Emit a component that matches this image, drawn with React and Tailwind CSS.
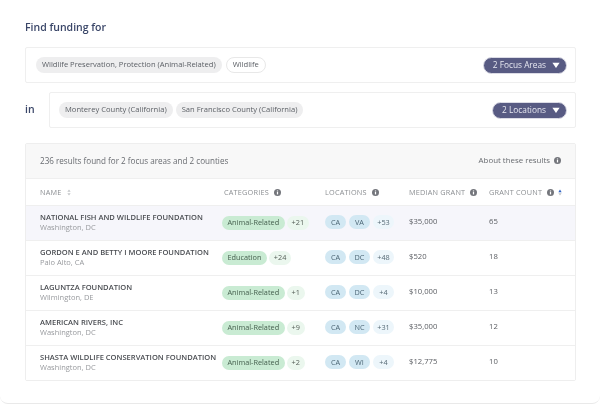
const rows = [
  { name: "NATIONAL FISH AND WILDLIFE FOUNDATION", place: "Washington, DC", cat: "Animal-Related", more: "+21", loc: ["CA", "VA"], locMore: "+53", grant: "$35,000", count: "65", active: true },
  { name: "GORDON E AND BETTY I MOORE FOUNDATION", place: "Palo Alto, CA", cat: "Education", more: "+24", loc: ["CA", "DC"], locMore: "+48", grant: "$520", count: "18" },
  { name: "LAGUNTZA FOUNDATION", place: "Wilmington, DE", cat: "Animal-Related", more: "+1", loc: ["CA", "DC"], locMore: "+4", grant: "$10,000", count: "13" },
  { name: "AMERICAN RIVERS, INC", place: "Washington, DC", cat: "Animal-Related", more: "+9", loc: ["CA", "NC"], locMore: "+31", grant: "$35,000", count: "12" },
  { name: "SHASTA WILDLIFE CONSERVATION FOUNDATION", place: "Washington, DC", cat: "Animal-Related", more: "+2", loc: ["CA", "WI"], locMore: "+4", grant: "$12,775", count: "10" },
];

function Info() {
  return (
    <svg viewBox="0 0 8 8" className="w-[7px] h-[7px] shrink-0">
      <circle cx="4" cy="4" r="4" fill="#74767c" />
      <rect x="3.3" y="3.4" width="1.4" height="2.8" fill="#fff" />
      <rect x="3.3" y="1.7" width="1.4" height="1.1" fill="#fff" />
    </svg>
  );
}

function Caret() {
  return (
    <svg viewBox="0 0 10 8" className="w-[8px] h-[6.5px] shrink-0">
      <path d="M0.5 1h9L5 7.5z" fill="#fff" />
    </svg>
  );
}

function Tag({ children, white }) {
  return (
    <span className={`h-4 px-1.5 flex items-center rounded-full text-[7.6px] text-[#5c6066] whitespace-nowrap ${white ? "bg-white border border-[#e8e8e8]" : "bg-[#eeeeef]"}`}>
      {children}
    </span>
  );
}

function Select({ children }) {
  return (
    <span className="h-[17px] pl-[9px] pr-[6px] flex items-center gap-[6px] rounded-full bg-[#585b83] border border-[#dcdce6] text-[8.3px] text-[#e8e9f2] whitespace-nowrap">
      {children}
      <Caret />
    </span>
  );
}

function Head({ children, className = "" }) {
  return <div className={`flex items-center gap-[5px] text-[7.3px] tracking-[0.2px] text-[#8b8e92] whitespace-nowrap ${className}`}>{children}</div>;
}

export default function App() {
  return (
    <div className="w-[600px] h-[404px] overflow-hidden bg-white blur-[0.55px] font-['Open_Sans',sans-serif]">
      <div className="h-[404px] pl-[25px] pr-[24px] pt-[20px] border-b border-[#e9e9e9] rounded-b-lg">
        <div className="h-[15px] flex items-center text-[10.5px] font-semibold text-[#3a4668]">Find funding for</div>

        <div className="mt-[12px] h-[36px] pl-[10px] pr-[8px] flex items-center justify-between border border-[#efefef] rounded-[2px]">
          <div className="flex items-center gap-[4px]">
            <Tag>Wildlife Preservation, Protection (Animal-Related)</Tag>
            <Tag white>Wildlife</Tag>
          </div>
          <Select>2 Focus Areas</Select>
        </div>

        <div className="mt-[9px] flex items-center">
          <div className="w-[24px] text-[10.5px] font-semibold text-[#3a4668]">in</div>
          <div className="flex-1 h-[36px] pl-[9px] pr-[8px] flex items-center justify-between border border-[#efefef] rounded-[2px]">
            <div className="flex items-center gap-[3px]">
              <Tag>Monterey County (California)</Tag>
              <Tag>San Francisco County (California)</Tag>
            </div>
            <Select>2 Locations</Select>
          </div>
        </div>

        <div className="mt-[15px] border border-[#eeeeee] rounded-[2px]">
          <div className="h-[35px] pl-[14px] pr-[14px] flex items-center justify-between bg-[#f8f8f8] border-b border-[#efefef] text-[8.1px] text-[#686b70]">
            <span>236 results found for 2 focus areas and 2 counties</span>
            <span className="flex items-center gap-1 text-[7.9px]">About these results <Info /></span>
          </div>

          <div className="h-[26px] pl-[14px] grid grid-cols-[184px_101px_84px_80px_1fr] items-center">
            <Head>
              NAME
              <svg viewBox="0 0 6 10" className="w-[4px] h-[7px]">
                <path d="M3 0.5 5.5 4h-5zM3 9.5.5 6h5z" fill="#c4c6c9" />
              </svg>
            </Head>
            <Head>CATEGORIES <Info /></Head>
            <Head>LOCATIONS <Info /></Head>
            <Head>MEDIAN GRANT <Info /></Head>
            <Head>
              GRANT COUNT <Info />
              <svg viewBox="0 0 6 10" className="-ml-[1px] w-[4px] h-[7px]">
                <path d="M3 0.5 5.5 4.5h-5z" fill="#2f63c4" />
                <path d="M3 9.5.5 6h5z" fill="#c4c6c9" />
              </svg>
            </Head>
          </div>

          {rows.map((r) => (
            <div
              key={r.name}
              className={`h-[35px] pl-[14px] grid grid-cols-[182px_103px_84px_80px_1fr] items-center border-t border-[#efefef] ${r.active ? "bg-[#f6f6fb]" : "bg-white"}`}
            >
              <div className="whitespace-nowrap -mt-[0.5px]">
                <div className="text-[7.55px] leading-[10px] font-semibold text-[#4a4d52]">{r.name}</div>
                <div className="text-[7.5px] leading-[11px] text-[#989a9e]">{r.place}</div>
              </div>
              <div className="flex items-center gap-[2px] -mt-[0.5px]">
                <span className="h-[14px] px-[5.5px] flex items-center rounded-full bg-[#c9ebd3] text-[7.3px] text-[#46604f]">{r.cat}</span>
                <span className="h-[14px] px-[5px] flex items-center rounded-full bg-[#ebf7ee] text-[7.3px] text-[#566059]">{r.more}</span>
              </div>
              <div className="flex items-center gap-[3px] -mt-[1.5px]">
                {r.loc.map((l) => (
                  <span key={l} className="w-[21px] h-[14px] flex items-center justify-center rounded-full bg-[#d2e8f3] text-[7.3px] text-[#4c6675]">{l}</span>
                ))}
                <span className="w-[21px] h-[14px] flex items-center justify-center rounded-full bg-[#edf6fb] text-[7.3px] text-[#566a76]">{r.locMore}</span>
              </div>
              <div className="text-[7.7px] text-[#5a5d62] -mt-[1.5px]">{r.grant}</div>
              <div className="text-[7.7px] text-[#5a5d62] -mt-[1.5px]">{r.count}</div>
            </div>
          ))}
        </div>
      </div>
    </div>
  );
}
